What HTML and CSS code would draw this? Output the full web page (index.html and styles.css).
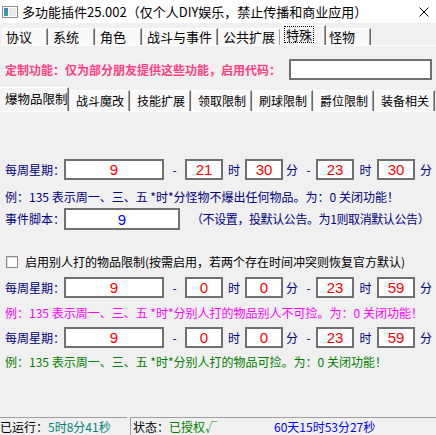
FILE: index.html
```html
<!DOCTYPE html>
<html lang="zh-CN">
<head>
    <meta charset="UTF-8">
    <title>多功能插件25.002</title>
    <link rel="stylesheet" href="styles.css">
</head>
<body>
<div class="window">
    <div class="titlebar">
        <svg class="app-icon" viewBox="0 0 16 12">
            <rect x="0.5" y="0.5" width="15" height="11" fill="#fff" stroke="#8c8c8c"/>
            <rect x="2" y="2" width="4" height="8" fill="#3aa0a0"/>
            <rect x="2" y="2" width="4" height="3" fill="#4a7fd0"/>
            <rect x="7" y="2" width="7" height="8" fill="#e8e8e8"/>
        </svg>
        <span class="title">多功能插件25.002（仅个人DIY娱乐，禁止传播和商业应用）</span>
        <svg class="close" viewBox="0 0 10 10">
            <path d="M0.5 0.5 L9.5 9.5 M9.5 0.5 L0.5 9.5" stroke="#000" stroke-width="1"/>
        </svg>
    </div>

    <div class="tabs tabs-main">
        <span class="tab">协议</span>
        <span class="tab">系统</span>
        <span class="tab">角色</span>
        <span class="tab">战斗与事件</span>
        <span class="tab">公共扩展</span>
        <span class="tab active"><span class="focus">特殊</span></span>
        <span class="tab">怪物</span>
    </div>

    <div class="panel">
        <div class="code-row">
            <span class="code-label">定制功能：仅为部分朋友提供这些功能，启用代码：</span>
            <input class="code-input" type="text" value="">
        </div>

        <div class="tabs tabs-sub">
            <span class="tab active">爆物品限制</span>
            <span class="tab">战斗魔改</span>
            <span class="tab">技能扩展</span>
            <span class="tab">领取限制</span>
            <span class="tab">刷球限制</span>
            <span class="tab">爵位限制</span>
            <span class="tab">装备相关</span>
        </div>

        <div class="sub-panel">
            <div class="time-row row-first">
                <span class="lbl">每周星期：</span>
                <input class="box box-wide" type="text" value="9">
                <span class="sep">-</span>
                <input class="box" type="text" value="21">
                <span class="unit-h">时</span>
                <input class="box" type="text" value="30">
                <span class="unit-m">分</span>
                <span class="dash">-</span>
                <input class="box" type="text" value="23">
                <span class="unit-h2">时</span>
                <input class="box" type="text" value="30">
                <span class="unit-end">分</span>
            </div>
            <div class="example ex-navy">例：135 表示周一、三、五 *时*分怪物不爆出任何物品。为：0 关闭功能！</div>

            <div class="time-row row-script">
                <span class="lbl">事件脚本：</span>
                <input class="box box-script" type="text" value="9">
                <span class="script-note">（不设置，投默认公告。为1则取消默认公告）</span>
            </div>

            <div class="check-row">
                <span class="checkbox"></span>
                <span class="check-label">启用别人打的物品限制(按需启用，若两个存在时间冲突则恢复官方默认)</span>
            </div>

            <div class="time-row row-second">
                <span class="lbl">每周星期：</span>
                <input class="box box-wide" type="text" value="9">
                <span class="sep">-</span>
                <input class="box" type="text" value="0">
                <span class="unit-h">时</span>
                <input class="box" type="text" value="0">
                <span class="unit-m">分</span>
                <span class="dash">-</span>
                <input class="box" type="text" value="23">
                <span class="unit-h2">时</span>
                <input class="box" type="text" value="59">
                <span class="unit-end">分</span>
            </div>
            <div class="example ex-pink">例：135 表示周一、三、五 *时*分别人打的物品别人不可捡。为：0 关闭功能！</div>

            <div class="time-row row-third">
                <span class="lbl">每周星期：</span>
                <input class="box box-wide" type="text" value="9">
                <span class="sep">-</span>
                <input class="box" type="text" value="0">
                <span class="unit-h">时</span>
                <input class="box" type="text" value="0">
                <span class="unit-m">分</span>
                <span class="dash">-</span>
                <input class="box" type="text" value="23">
                <span class="unit-h2">时</span>
                <input class="box" type="text" value="59">
                <span class="unit-end">分</span>
            </div>
            <div class="example ex-green">例：135 表示周一、三、五 *时*分别人打的物品可捡。为：0 关闭功能！</div>
        </div>
    </div>

    <div class="statusbar">
        <div class="sb-panel sb-first">已运行：<span class="sb-teal">5时8分41秒</span></div>
        <div class="sb-panel sb-second">
            <span class="sb-state">状态：<span class="sb-green">已授权√</span></span>
            <span class="sb-blue">60天15时53分27秒</span>
        </div>
    </div>
</div>
</body>
</html>
```

FILE: styles.css
```css
body {
    margin: 0;
    width: 436px;
    height: 435px;
    overflow: hidden;
    background-color: #f0f0f0;
    font-family: "Noto Sans CJK SC", sans-serif;
    font-size: 12px;
    color: #000;
}

.window {
    display: flex;
    flex-direction: column;
    height: 435px;
}

/* title bar */
.titlebar {
    height: 23px;
    background-color: #fff;
    display: flex;
    align-items: center;
}

.app-icon {
    width: 16px;
    height: 12px;
    margin-left: 2px;
}

.title {
    margin-left: 4px;
    font-size: 13px;
    line-height: 16px;
}

.close {
    width: 10px;
    height: 10px;
    margin-left: auto;
    margin-right: 7px;
}

/* tab strips */
.tabs {
    display: flex;
    align-items: flex-end;
}

.tab {
    box-sizing: border-box;
    background-color: #f8f8f8;
    border-top: 1px solid #fff;
    border-left: 1px solid #fff;
    border-right: 1px solid #696969;
    box-shadow: inset -1px 0 #a0a0a0;
    white-space: nowrap;
}

.tabs-main {
    height: 21px;
    margin-top: 1px;
    padding-left: 2px;
}

.tabs-main .tab {
    height: 17px;
    min-width: 46px;
    margin-right: 1px;
    padding: 0 5px 0 3px;
    font-size: 13px;
    line-height: 16px;
}

.tabs-main .tab.active {
    height: 20px;
    margin: 0 -1px 0 -2px;
    padding: 1px 4px 0 4px;
    position: relative;
    background-color: #f4f4f4;
}

.focus {
    display: inline-block;
    outline: 1px dotted #000;
    outline-offset: 0;
    padding: 0 1px;
    line-height: 15px;
}

.panel {
    border-top: 1px solid #fff;
    display: flex;
    flex-direction: column;
}

/* custom code */
.code-row {
    display: flex;
    align-items: center;
    height: 21px;
    margin-top: 13px;
    padding-left: 5px;
}

.code-label {
    width: 284px;
    flex-shrink: 0;
    color: #ff4081;
    font-weight: bold;
    font-size: 12px;
    white-space: nowrap;
}

.code-input {
    box-sizing: border-box;
    width: 143px;
    height: 21px;
    border: 2px solid #707070;
    background-color: #fff;
    margin: 0;
    padding: 0;
}

.tabs-sub {
    height: 24px;
    margin-top: 7px;
}

.tabs-sub .tab {
    height: 21px;
    margin-right: 1px;
    padding: 0 5px 0 5px;
    font-size: 12px;
    line-height: 19px;
}

.tabs-sub .tab.active {
    height: 24px;
    width: 73px;
    padding: 1px 0 0 5px;
    font-size: 12.5px;
    line-height: 20px;
    background-color: #f4f4f4;
    border-left: none;
}

.sub-panel {
    border-top: 1px solid #fff;
    padding-top: 47px;
    display: flex;
    flex-direction: column;
}

/* time rows */
.time-row {
    display: flex;
    align-items: center;
    height: 21px;
    padding-left: 5px;
    color: #000080;
    line-height: 16px;
    white-space: nowrap;
}

.time-row > * {
    flex-shrink: 0;
}

.lbl {
    width: 59px;
}

.box {
    box-sizing: border-box;
    width: 38px;
    height: 21px;
    margin: 0;
    padding: 0;
    border: 2px solid #707070;
    background-color: #fff;
    color: #ff0000;
    font-family: "Liberation Sans", sans-serif;
    font-size: 15px;
    text-align: center;
}

.box-wide {
    width: 100px;
}

.sep {
    width: 21px;
    text-align: center;
}

.unit-h {
    width: 22px;
    text-align: center;
}

.unit-m {
    width: 18px;
    text-align: center;
}

.dash {
    width: 15px;
    text-align: center;
}

.unit-h2 {
    width: 23px;
    text-align: center;
}

.unit-end {
    padding-left: 5px;
}

.row-script {
    height: 22px;
    margin-top: 3px;
}

.box-script {
    width: 116px;
    height: 22px;
    color: #0000ff;
}

.script-note {
    margin-left: 11px;
    letter-spacing: -0.4px;
}

.row-second {
    margin-top: 8px;
}

.row-third {
    margin-top: 6px;
}

.example {
    height: 16px;
    line-height: 16px;
    padding-left: 5px;
    white-space: nowrap;
}

.ex-navy {
    color: #000080;
    margin-top: 9px;
}

.ex-pink {
    color: #ff00ff;
    margin-top: 7px;
}

.ex-green {
    color: #008000;
    margin-top: 6px;
}

/* checkbox */
.check-row {
    display: flex;
    align-items: center;
    height: 14px;
    margin-top: 25px;
    padding-left: 6px;
}

.checkbox {
    box-sizing: border-box;
    width: 12px;
    height: 12px;
    flex-shrink: 0;
    border: 1px solid #8a8a8a;
    background-color: #fff;
    box-shadow: inset 1px 1px #e0e0e0;
}

.check-label {
    margin-left: 7px;
    line-height: 16px;
    white-space: nowrap;
}

/* status bar */
.statusbar {
    margin-top: auto;
    height: 18px;
    display: flex;
}

.sb-panel {
    box-sizing: border-box;
    border-top: 1px solid #a0a0a0;
    line-height: 17px;
    white-space: nowrap;
}

.sb-first {
    width: 127px;
}

.sb-second {
    flex: 1;
    margin-left: 3px;
    border-left: 1px solid #a0a0a0;
    padding-left: 2px;
    display: flex;
}

.sb-state {
    width: 141px;
}

.sb-teal {
    color: #008080;
}

.sb-green {
    color: #008000;
}

.sb-blue {
    color: #0000ff;
}
```
